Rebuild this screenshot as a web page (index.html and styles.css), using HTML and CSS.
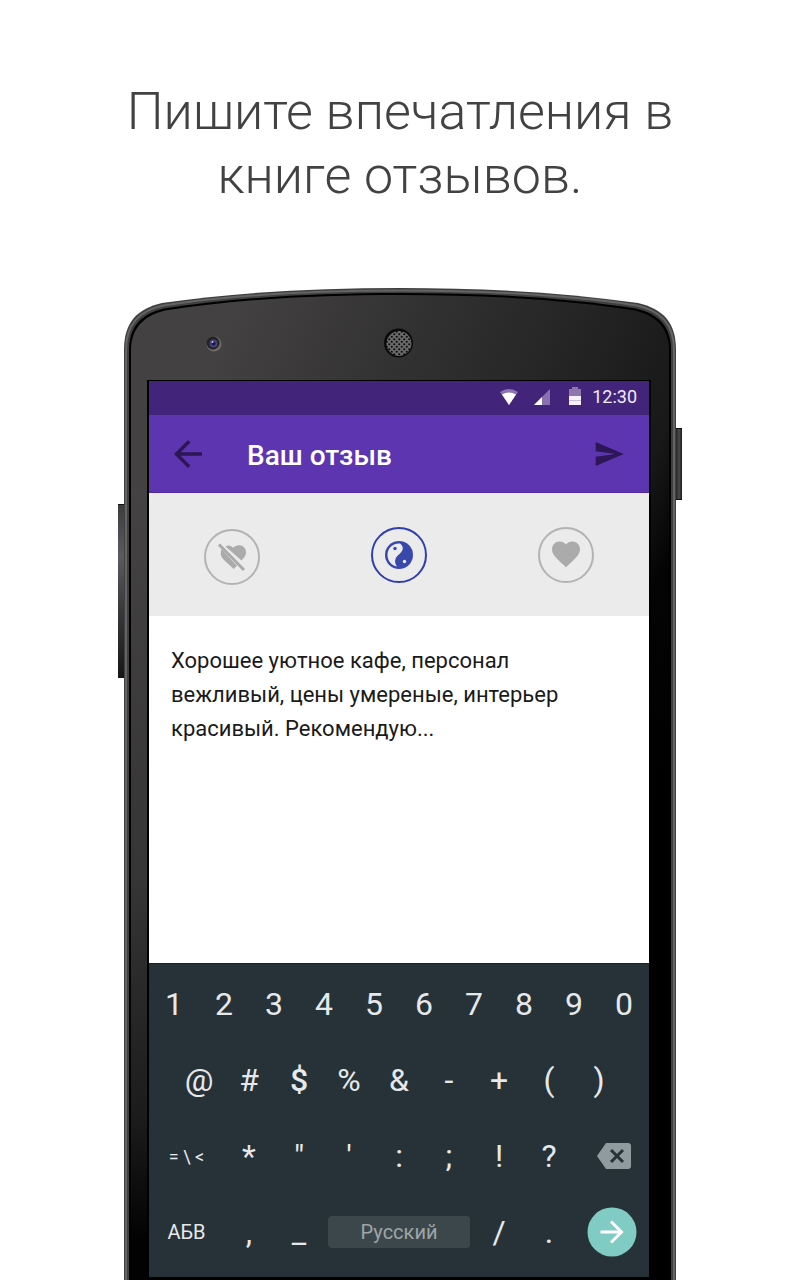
FILE: index.html
```html
<!DOCTYPE html>
<html lang="ru">
<head>
<meta charset="utf-8">
<meta name="viewport" content="width=device-width, initial-scale=1">
<title>Ваш отзыв</title>
<link rel="stylesheet" href="styles.css">
</head>
<body>
<h1 class="headline">Пишите впечатления в книге отзывов.</h1>

<main class="phone">
  <svg class="phone-body" viewBox="0 0 564 992" preserveAspectRatio="none" aria-hidden="true">
    <defs>
      <linearGradient id="face" gradientUnits="userSpaceOnUse" x1="100" y1="60" x2="640" y2="300">
        <stop offset="0" stop-color="#434142"/>
        <stop offset=".3" stop-color="#323132"/>
        <stop offset=".55" stop-color="#242424"/>
        <stop offset=".75" stop-color="#181818"/>
        <stop offset=".84" stop-color="#040404"/>
        <stop offset="1" stop-color="#000"/>
      </linearGradient>
      <linearGradient id="side" x1="0" y1="0" x2="0" y2="1">
        <stop offset="0" stop-color="#444243"/>
        <stop offset=".5" stop-color="#363535"/>
        <stop offset=".8" stop-color="#1c1b1b"/>
        <stop offset=".95" stop-color="#020202"/>
      </linearGradient>
      <linearGradient id="volume" x1="0" y1="0" x2="0" y2="1">
        <stop offset="0" stop-color="#3c3c3e"/>
        <stop offset=".3" stop-color="#5a5a60"/>
        <stop offset=".6" stop-color="#3a3a3c"/>
        <stop offset="1" stop-color="#161616"/>
      </linearGradient>
      <linearGradient id="power" x1="0" y1="0" x2="1" y2="0">
        <stop offset="0" stop-color="#1c1c1c"/>
        <stop offset=".6" stop-color="#4a4a4a"/>
        <stop offset="1" stop-color="#1c1c1c"/>
      </linearGradient>
      <pattern id="mesh" width="5" height="5" patternUnits="userSpaceOnUse">
        <rect width="5" height="5" fill="#6a6a6a"/>
        <circle cx="1.250" cy="1.250" r="1.100" fill="#0c0c0c"/>
        <circle cx="3.750" cy="3.750" r="1.100" fill="#0c0c0c"/>
      </pattern>
    </defs>
    <rect x="0" y="216" width="7" height="174" fill="url(#volume)"/>
    <path d="M0 216.500H6M0 389.500H6" stroke="#111"/>
    <rect x="557" y="140" width="7" height="72" fill="url(#power)"/>
    <path d="M558 140.500H564M558 211.500H564" stroke="#111"/>
    <path d="M6 992V62C6 34 19 21 44 15C120 4 200 0 282 0S444 4 520 15C545 21 558 34 558 62V992Z" fill="#3f3f3f"/>
    <path d="M8 992V62C8 36 21 23 45 17.500C120 6 200 2.500 282 2.500S444 6 519 17.500C543 23 556 36 556 62V992" fill="none" stroke="#646464" stroke-width="2"/>
    <path d="M11 992V62C11 40 22 26 46 20.500C120 9 200 5 282 5S444 9 518 20.500C542 26 553 40 553 62V992Z" fill="#000"/>
    <path d="M13 992V62C13 42 24 28 47 22.500C120 11 200 7 282 7S444 11 517 22.500C540 28 551 42 551 62V992Z" fill="url(#face)"/>
    <rect x="13" y="200" width="16" height="792" fill="url(#side)"/>
    <rect x="29" y="92" width="504" height="900" fill="#000"/>
    <circle cx="96" cy="56" r="7.500" fill="#6f6a6a"/>
    <circle cx="95" cy="55" r="6.500" fill="#252222"/>
    <circle cx="95.500" cy="55.500" r="4" fill="#45437e"/>
    <circle cx="95.500" cy="55.500" r="2" fill="#191947"/>
    <circle cx="94.500" cy="54" r="1" fill="#c5c3e4"/>
    <circle cx="280.500" cy="55" r="14.500" fill="#0a0a0a"/>
    <circle cx="281" cy="55.500" r="12.500" fill="url(#mesh)"/>
  </svg>

  <div class="screen">
    <div class="status-bar">
      <svg class="status-icon" viewBox="0 0 20 20" aria-hidden="true">
        <path d="M1 5Q10-1 19 5L10 18Z" fill="#8d76b0"/>
        <path d="M3 7.500Q10 3.500 17 7.500L10 18Z" fill="#fff"/>
      </svg>
      <svg class="status-icon" viewBox="0 0 20 20" aria-hidden="true">
        <path d="M2 18 18 2V18Z" fill="#8971b0"/>
        <path d="M2 18 10 10V18Z" fill="#fff"/>
      </svg>
      <svg class="status-icon" viewBox="0 0 20 20" aria-hidden="true">
        <path d="M4 2H7V0H13V2H16V10H4Z" fill="#8d78ad"/>
        <path d="M4 9H16V18H4Z" fill="#f5f0fb"/>
        <path d="M4 13.500H16" stroke="#cbbfe0"/>
      </svg>
      <time class="clock">12:30</time>
    </div>

    <header class="app-bar">
      <button class="icon-button" type="button" aria-label="Назад">
        <svg class="back-icon" viewBox="0 0 24 24" aria-hidden="true"><path d="M20 11H7.830l5.590-5.590L12 4l-8 8 8 8 1.410-1.410L7.830 13H20z"/></svg>
      </button>
      <h2 class="title">Ваш отзыв</h2>
      <button class="icon-button" type="submit" form="review" aria-label="Отправить">
        <svg class="send-icon" viewBox="0 0 24 24" aria-hidden="true"><path d="M2 21l21-9L2 3v7l15 2-15 2z"/></svg>
      </button>
    </header>

    <form class="review" id="review">
      <div class="ratings" role="radiogroup" aria-label="Оценка">
        <label class="rating rating-low">
          <input class="rating-input" type="radio" name="rating" aria-label="Не понравилось">
          <svg class="rating-icon" viewBox="2 2 52 52" aria-hidden="true">
            <path d="M21.500 17.500C24.500 15.500 27.500 17 29.200 18.800C31 17 33 16 35.500 16.300C39.500 16.500 42 19.500 42 23.500C42 26.500 40 29 37.500 31.500Z"/>
            <path d="M17.500 20C16 25 17 28 20 31L29.700 40L33 36.700Z"/>
            <path d="M15 15.500 40 41" fill="none" stroke="#ababab" stroke-width="3"/>
          </svg>
        </label>
        <label class="rating rating-active">
          <input class="rating-input" type="radio" name="rating" aria-label="Нормально" checked>
          <svg class="rating-icon" viewBox="2 2 52 52" aria-hidden="true">
            <circle cx="28" cy="28" r="14"/>
            <path d="M29 16.500C21 16 16.500 22 16.500 28C16.500 34 21 39 26 39.500C22 34 25 29.500 28.500 27C32 24 33.500 20 29 16.500Z" fill="#ececec"/>
            <circle cx="24" cy="21.500" r="1.700"/>
            <circle cx="33.500" cy="34.500" r="1.700" fill="#ececec"/>
          </svg>
        </label>
        <label class="rating">
          <input class="rating-input" type="radio" name="rating" aria-label="Понравилось">
          <svg class="rating-icon" viewBox="2 2 52 52" aria-hidden="true">
            <path transform="translate(11.200 10.300) scale(1.400)" d="M12 21.350l-1.450-1.320C5.400 15.360 2 12.280 2 8.500 2 5.420 4.420 3 7.500 3c1.740 0 3.410.810 4.500 2.090C13.090 3.810 14.760 3 16.500 3 19.580 3 22 5.420 22 8.500c0 3.780-3.400 6.860-8.550 11.540z"/>
          </svg>
        </label>
      </div>
      <textarea class="review-text" aria-label="Текст отзыва" spellcheck="false">Хорошее уютное кафе, персонал вежливый, цены умереные, интерьер красивый. Рекомендую...</textarea>
    </form>

    <div class="keyboard">
      <div class="row">
        <button class="key" type="button">1</button>
        <button class="key" type="button">2</button>
        <button class="key" type="button">3</button>
        <button class="key" type="button">4</button>
        <button class="key" type="button">5</button>
        <button class="key" type="button">6</button>
        <button class="key" type="button">7</button>
        <button class="key" type="button">8</button>
        <button class="key" type="button">9</button>
        <button class="key" type="button">0</button>
      </div>
      <div class="row">
        <button class="key key-inset" type="button">@</button>
        <button class="key" type="button">#</button>
        <button class="key key-bold" type="button">$</button>
        <button class="key" type="button">%</button>
        <button class="key" type="button">&amp;</button>
        <button class="key" type="button">-</button>
        <button class="key" type="button">+</button>
        <button class="key" type="button">(</button>
        <button class="key" type="button">)</button>
      </div>
      <div class="row">
        <button class="key key-wide key-symbols" type="button">= \ &lt;</button>
        <button class="key" type="button">*</button>
        <button class="key" type="button">"</button>
        <button class="key" type="button">'</button>
        <button class="key" type="button">:</button>
        <button class="key" type="button">;</button>
        <button class="key" type="button">!</button>
        <button class="key" type="button">?</button>
        <button class="key key-wide key-delete" type="button" aria-label="Удалить">
          <svg class="delete-icon" viewBox="0 0 34 26" aria-hidden="true">
            <path d="M9 0H31Q34 0 34 3V23Q34 26 31 26H9L0 13Z" fill="#8f9b9f"/>
            <path d="M14 7 26 19M26 7 14 19" stroke="#263238" stroke-width="3"/>
          </svg>
        </button>
      </div>
      <div class="row">
        <button class="key key-wide key-letters" type="button">АБВ</button>
        <button class="key" type="button">,</button>
        <button class="key" type="button">_</button>
        <button class="key key-space" type="button"><span class="space-label">Русский</span></button>
        <button class="key" type="button">/</button>
        <button class="key" type="button">.</button>
        <button class="key key-wide" type="button" aria-label="Далее">
          <svg class="enter-icon" viewBox="0 0 50 50" aria-hidden="true">
            <circle cx="25" cy="25" r="24.500" fill="#80cbc4"/>
            <path d="M13.500 25H34M24 14.500 34.500 25 24 35.500" fill="none" stroke="#fff" stroke-width="3"/>
          </svg>
        </button>
      </div>
    </div>
  </div>
</main>
</body>
</html>
```
FILE: styles.css
```css
* {
  box-sizing: border-box;
}

body {
  margin: 0;
  min-height: 100vh;
  display: flex;
  flex-direction: column;
  align-items: center;
  background: #fff;
  font-family: Roboto, "Noto Sans", sans-serif;
}

button {
  padding: 0;
  border: 0;
  background: none;
  color: inherit;
  font: inherit;
}

.headline {
  margin: 0;
  padding: 80px 16px;
  max-width: 640px;
  color: #424242;
  font-size: 52px;
  font-weight: 300;
  line-height: 64px;
  text-align: center;
}

.phone {
  position: relative;
  flex: 1;
  display: flex;
  width: 100%;
  max-width: 564px;
  padding: 93px 33px 3px 31px;
}

.phone-body {
  position: absolute;
  inset: 0;
  width: 100%;
  height: 100%;
}

.screen {
  position: relative;
  flex: 1;
  display: flex;
  flex-direction: column;
  min-width: 0;
  background: #fff;
}

.status-bar {
  display: flex;
  align-items: center;
  justify-content: flex-end;
  gap: 13px;
  height: 34px;
  padding: 0 12px 3px 0;
  background: #42257a;
  color: #f0eaf8;
  font-size: 18px;
}

.status-icon {
  width: 20px;
  height: 20px;
}

.clock {
  margin-left: -6px;
}

.app-bar {
  display: flex;
  align-items: center;
  height: 78px;
  padding: 0 24px 0 18px;
  background: #5e35b1;
  border-bottom: 1px solid #5129a0;
  color: #fff;
}

.icon-button {
  display: flex;
  color: #2d1656;
}

.icon-button svg {
  fill: currentColor;
}

.back-icon {
  width: 42px;
  height: 42px;
}

.send-icon {
  width: 32px;
  height: 32px;
}

.title {
  flex: 1;
  margin: 0;
  padding: 4px 0 0 38px;
  font-size: 28px;
  font-weight: 500;
}

.review {
  flex: 1;
  display: flex;
  flex-direction: column;
}

.ratings {
  display: grid;
  grid-template-columns: repeat(3, 1fr);
  place-items: center;
  height: 123px;
  background: #ebebeb;
}

.rating {
  display: flex;
  border: 2px solid #b3b3b3;
  border-radius: 50%;
  color: #ababab;
}

.rating-low {
  margin-top: 5px;
}

.rating-active {
  border-color: #303fab;
  color: #3949ab;
}

.rating-input {
  position: absolute;
  opacity: 0;
}

.rating-icon {
  width: 52px;
  height: 52px;
  fill: currentColor;
}

.review-text {
  flex: 1;
  width: 100%;
  padding: 28px 40px 28px 22px;
  border: 0;
  outline: 0;
  resize: none;
  background: #fff;
  color: #1a1a1a;
  font: inherit;
  font-size: 22px;
  line-height: 34px;
}

.keyboard {
  padding: 2px 0 7px;
  background: #263238;
  border-top: 1px solid #162025;
  color: #e6e9eb;
  font-size: 32px;
}

.row {
  display: grid;
  grid-template-columns: repeat(20, 1fr);
  grid-auto-rows: 76px;
}

.key {
  grid-column: span 2;
  display: flex;
  align-items: center;
  justify-content: center;
}

.key-inset {
  grid-column: 2 / span 2;
}

.key-bold {
  font-weight: 500;
}

.key-wide {
  grid-column: span 3;
}

.key-symbols {
  font-size: 18px;
}

.key-letters {
  font-size: 20px;
}

.key-delete {
  padding-left: 4px;
}

.key-space {
  grid-column: span 6;
  padding: 0 4px;
}

.space-label {
  flex: 1;
  border-radius: 4px;
  background: #3c474c;
  color: #9ea5a8;
  font-size: 20px;
  line-height: 32px;
}

.delete-icon {
  width: 34px;
  height: 26px;
}

.enter-icon {
  width: 50px;
  height: 50px;
}
```
